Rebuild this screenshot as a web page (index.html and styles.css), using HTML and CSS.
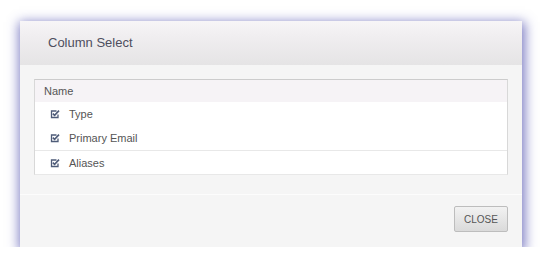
FILE: index.html
```html
<!DOCTYPE html>
<html>
<head>
<meta charset="utf-8">
<link rel="stylesheet" href="styles.css">
</head>
<body>
<div class="page">
  <div class="dialog">
    <div class="header"><span class="title">Column Select</span></div>
    <div class="body">
      <div class="table">
        <div class="thead">Name</div>
        <div class="row"><svg class="cb" viewBox="0 0 10 10"><path d="M8 5.5V8.5H1.5V2H6.5" fill="none" stroke="currentColor" stroke-width="1.3"/><path d="M2.8 4.6L4.6 6.4L9 1.6" fill="none" stroke="currentColor" stroke-width="1.6"/></svg><span>Type</span></div>
        <div class="row"><svg class="cb" viewBox="0 0 10 10"><path d="M8 5.5V8.5H1.5V2H6.5" fill="none" stroke="currentColor" stroke-width="1.3"/><path d="M2.8 4.6L4.6 6.4L9 1.6" fill="none" stroke="currentColor" stroke-width="1.6"/></svg><span>Primary Email</span></div>
        <div class="row sep"><svg class="cb" viewBox="0 0 10 10"><path d="M8 5.5V8.5H1.5V2H6.5" fill="none" stroke="currentColor" stroke-width="1.3"/><path d="M2.8 4.6L4.6 6.4L9 1.6" fill="none" stroke="currentColor" stroke-width="1.6"/></svg><span>Aliases</span></div>
      </div>
    </div>
    <div class="footer">
      <button class="btn">CLOSE</button>
    </div>
  </div>
</div>
</body>
</html>
```

FILE: styles.css
```css
html, body {
  margin: 0;
  padding: 0;
  background: #ffffff;
}
body {
  font-family: "Liberation Sans", Arial, sans-serif;
  color: #555555;
}
.page {
  padding: 21px 18px 0 20px;
}
.dialog {
  width: 502px;
  height: 226px;
  display: flex;
  flex-direction: column;
  background: #f5f5f5;
  box-shadow: 1px 3px 11px 2px rgba(70, 70, 170, 0.7);
}
.header {
  height: 44px;
  flex: none;
  display: flex;
  align-items: center;
  padding-left: 28px;
  background: linear-gradient(to bottom, #f7f5f7 0%, #efedef 40%, #e5e4e5 100%);
}
.title {
  font-size: 13px;
  color: #4e4e5e;
  padding-bottom: 2px;
}
.body {
  flex: none;
  padding: 14px 14px 0 14px;
  height: 130px;
  box-sizing: border-box;
  border-bottom: 1px solid #fcfcfc;
}
.table {
  border: 1px solid #d8d8d8;
  border-top-color: #cccccc;
  border-bottom-color: #e8e8e8;
  background: #ffffff;
}
.thead {
  height: 22px;
  display: flex;
  align-items: center;
  padding-left: 9px;
  font-size: 11px;
  color: #555;
  background: #f6f3f6;
}
.row {
  height: 24px;
  display: flex;
  align-items: center;
  padding-left: 15px;
  font-size: 11px;
  color: #555;
}
.row.sep {
  border-top: 1px solid #e8e8e8;
  height: 23px;
}
.cb {
  width: 10px;
  height: 10px;
  color: #4e5b78;
  margin-right: 9px;
}
.footer {
  flex: 1;
  display: flex;
  justify-content: flex-end;
  align-items: flex-start;
  padding: 11px 14px 0 0;
}
.btn {
  width: 54px;
  height: 26px;
  font-family: "Liberation Sans", Arial, sans-serif;
  font-size: 10px;
  color: #555;
  background: linear-gradient(to bottom, #f2f2f2, #dadada);
  border: 1px solid #bdbdbd;
  border-radius: 2px;
  padding: 0;
}
```
